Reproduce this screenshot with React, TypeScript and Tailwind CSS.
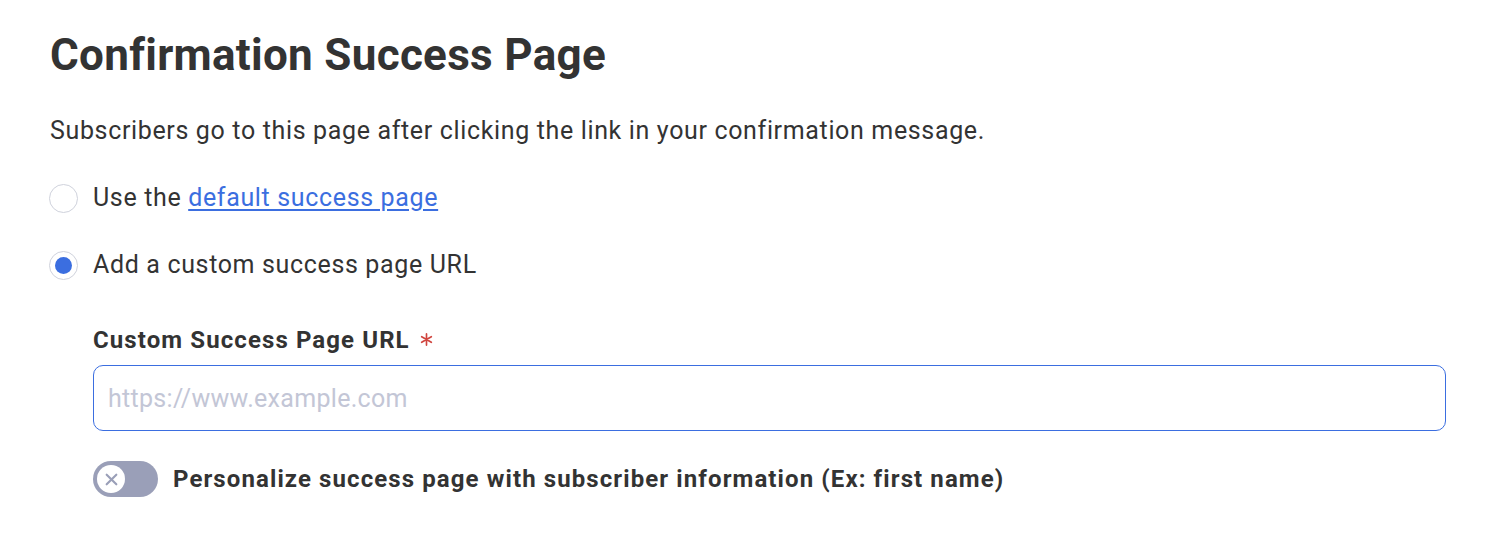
import { useState } from "react";

export default function App() {
  const [mode, setMode] = useState<"default" | "custom">("custom");
  const [url, setUrl] = useState("");
  const [personalize, setPersonalize] = useState(false);

  return (
    <div className="min-h-[558px] bg-white px-[50px] pt-[29px] text-[#333333] font-['Roboto',sans-serif]">
      <h1 className="text-[44px] font-bold leading-[52px] tracking-[0.3px]">Confirmation Success Page</h1>
      <p className="mt-[34px] text-[25px] leading-[32px] tracking-[0.65px]">
        Subscribers go to this page after clicking the link in your confirmation message.
      </p>

      <div className="mt-[35px] flex flex-col gap-[35px]">
        <label className="flex cursor-pointer items-center gap-[15px]" onClick={() => setMode("default")}>
          <span className="-ml-[1px] flex h-[29px] w-[29px] items-center justify-center rounded-full border border-[#cfd2dc] bg-white">
            {mode === "default" && <span className="h-[17px] w-[17px] rounded-full bg-[#3b6ee0]" />}
          </span>
          <span className="text-[25px] leading-[32px] tracking-[0.65px]">
            Use the{" "}
            <a href="#" className="text-[#3b6ee0] underline underline-offset-[3px]">
              default success page
            </a>
          </span>
        </label>

        <label className="flex cursor-pointer items-center gap-[15px]" onClick={() => setMode("custom")}>
          <span className="-ml-[1px] flex h-[29px] w-[29px] items-center justify-center rounded-full border border-[#cfd2dc] bg-white">
            {mode === "custom" && <span className="h-[17px] w-[17px] rounded-full bg-[#3b6ee0]" />}
          </span>
          <span className="text-[25px] leading-[32px] tracking-[0.65px]">Add a custom success page URL</span>
        </label>
      </div>

      <div className="ml-[43px] mt-[43px] w-[1353px]">
        <div className="flex items-center gap-[10px] text-[24px] font-bold leading-[32px] tracking-[1.1px]">
          Custom Success Page URL
          <svg width="13" height="13" viewBox="0 0 14 14" stroke="#d0453f" strokeWidth="1.8" strokeLinecap="round" className="mt-[-2px]">
            <path d="M7 1v12M1.8 4l10.4 6M1.8 10l10.4-6" />
          </svg>
        </div>
        <input
          value={url}
          onChange={(e) => setUrl(e.target.value)}
          placeholder="https://www.example.com"
          autoFocus
          className="mt-[9px] h-[66px] w-full rounded-[10px] border border-[#3b6ee0] px-[14px] text-[25px] tracking-[0.3px] text-[#333333] caret-[#222222] outline-none placeholder:text-[#c3c6d6]"
        />
        <div className="mt-[30px] flex items-center gap-[15px]">
          <button
            onClick={() => setPersonalize(!personalize)}
            className={`flex h-[36px] w-[65px] items-center rounded-full px-[4px] ${personalize ? "justify-end bg-[#3b6ee0]" : "justify-start bg-[#9a9fb8]"}`}
          >
            <span className="flex h-[28px] w-[28px] items-center justify-center rounded-full bg-white">
              {!personalize && (
                <svg width="15" height="15" viewBox="0 0 14 14" fill="none" stroke="#9a9fb8" strokeWidth="2" strokeLinecap="round">
                  <path d="M2.5 2.5l9 9M11.5 2.5l-9 9" />
                </svg>
              )}
            </span>
          </button>
          <span className="text-[24px] font-bold leading-[32px] tracking-[1.1px]">
            Personalize success page with subscriber information (Ex: first name)
          </span>
        </div>
      </div>
    </div>
  );
}
